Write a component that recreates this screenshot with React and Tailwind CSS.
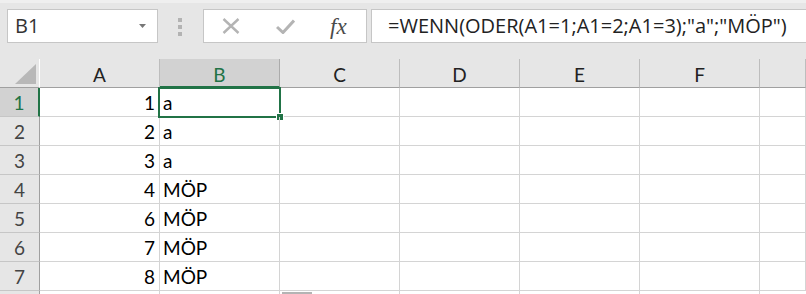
import React from 'react';

const cols = ['A', 'B', 'C', 'D', 'E', 'F', ''];

const rows = [
  { n: 1, a: '1', b: 'a' },
  { n: 2, a: '2', b: 'a' },
  { n: 3, a: '3', b: 'a' },
  { n: 4, a: '4', b: 'MÖP' },
  { n: 5, a: '6', b: 'MÖP' },
  { n: 6, a: '7', b: 'MÖP' },
  { n: 7, a: '8', b: 'MÖP' },
];

function Toolbar() {
  return (
    <div className="h-[59px] bg-[#e6e6e6] border-t-[3px] border-[#efefef] flex items-start pt-[6px] pl-[7px]">
      <div className="w-[151px] h-[34px] bg-white border border-[#c6c6c6] flex items-center justify-between pl-[7px] pr-[11px]">
        <span className="text-[20px] text-[#333] font-['Open_Sans',sans-serif] leading-none">B1</span>
        <svg width="7" height="4" viewBox="0 0 7 4"><path d="M0 0h7L3.5 4z" fill="#777" /></svg>
      </div>
      <div className="ml-[20px] mt-[9px] flex flex-col gap-[3px]">
        <div className="w-[4px] h-[4px] bg-[#b3b3b3]" />
        <div className="w-[4px] h-[4px] bg-[#b3b3b3]" />
        <div className="w-[4px] h-[4px] bg-[#b3b3b3]" />
      </div>
      <div className="ml-[21px] w-[164px] h-[34px] bg-white border border-[#c6c6c6] flex items-center">
        <svg className="ml-[18px]" width="18" height="16" viewBox="0 0 18 16">
          <path d="M1.5 1l15 14M16.5 1l-15 14" stroke="#b4b4b4" strokeWidth="2.4" />
        </svg>
        <svg className="ml-[36px]" width="19" height="15" viewBox="0 0 19 15">
          <path d="M1 8l6 5.5L18 1.5" stroke="#b4b4b4" strokeWidth="3" fill="none" />
        </svg>
        <span className="ml-[35px] text-[23px] italic text-[#4a4a4a] font-['Liberation_Serif',serif] leading-none">fx</span>
      </div>
      <div className="ml-[4px] flex-1 h-[34px] bg-white border border-[#c6c6c6] border-r-0 flex items-center pl-[16px]">
        <span className="text-[20px] text-[#222] font-['Open_Sans',sans-serif] leading-none whitespace-nowrap">=WENN(ODER(A1=1;A1=2;A1=3);"a";"MÖP")</span>
      </div>
    </div>
  );
}

function Header() {
  return (
    <div className="grid grid-cols-[40px_120px_120px_120px_120px_120px_120px_1fr] h-[29px] bg-[#e6e6e6]">
      <div className="border-r border-r-white border-b border-b-[#a0a0a0] flex items-end justify-end pr-[3px] pb-[3px]">
        <svg width="21" height="20" viewBox="0 0 21 20"><path d="M21 0V20H0z" fill="#b8b8b8" /></svg>
      </div>
      {cols.map((c, i) =>
        c === 'B' ? (
          <div key={i} className="bg-[#d2d2d2] border-r border-r-[#ababab] border-b-2 border-b-[#217346] flex items-center justify-center text-[19px] text-[#217346] leading-none pt-[3px]">
            {c}
          </div>
        ) : (
          <div key={i} className="border-r border-r-[#bdbdbd] border-b border-b-[#a0a0a0] flex items-center justify-center text-[19px] text-[#222] leading-none pt-[3px]">
            {c}
          </div>
        )
      )}
    </div>
  );
}

function Row({ r }) {
  const sel = r.n === 1;
  return (
    <div className="grid grid-cols-[40px_120px_120px_120px_120px_120px_120px_1fr] h-[29px]">
      <div className={sel
        ? 'bg-[#d2d2d2] text-[#217346] border-r-2 border-r-[#217346] border-b border-b-[#c6c6c6] flex items-end justify-center pb-[4px] text-[19px] leading-none'
        : 'bg-[#e6e6e6] text-[#444] border-r border-r-[#a0a0a0] border-b border-b-[#c6c6c6] flex items-end justify-center pb-[4px] text-[19px] leading-none'}>
        {r.n}
      </div>
      <div className="border-r border-b border-[#d4d4d4] flex items-end justify-end pr-[4px] pb-[4px] text-[19px] text-black leading-none">
        {r.a}
      </div>
      <div className="relative border-r border-b border-[#d4d4d4] flex items-end pl-[3px] pb-[4px] text-[19px] text-black leading-none">
        {r.b}
        {sel && (
          <div className="absolute -left-[2px] -top-[1px] w-[123px] h-[31px] border-2 border-[#217346]">
            <div className="absolute -right-[5px] -bottom-[5px] w-[8px] h-[8px] bg-[#217346] border border-white" />
          </div>
        )}
      </div>
      {[0, 1, 2, 3, 4].map((i) => (
        <div key={i} className="border-r border-b border-[#d4d4d4]" />
      ))}
    </div>
  );
}

export default function App() {
  return (
    <div className="w-[806px] h-[294px] overflow-hidden bg-white font-['Lato',sans-serif]">
      <Toolbar />
      <Header />
      {rows.map((r) => (
        <Row key={r.n} r={r} />
      ))}
      <div className="grid grid-cols-[40px_120px_120px_120px_120px_120px_120px_1fr] h-[10px]">
        <div className="bg-[#e6e6e6] border-r border-r-[#a0a0a0]" />
        <div className="border-r border-[#d4d4d4]" />
        <div className="border-r border-[#d4d4d4]" />
        <div className="border-r border-[#d4d4d4] pl-[2px] pt-[1px]">
          <div className="w-[30px] h-[3px] bg-[#b4b4b4]" />
        </div>
        <div className="border-r border-[#d4d4d4]" />
        <div className="border-r border-[#d4d4d4]" />
        <div className="border-r border-[#d4d4d4]" />
        <div />
      </div>
    </div>
  );
}
